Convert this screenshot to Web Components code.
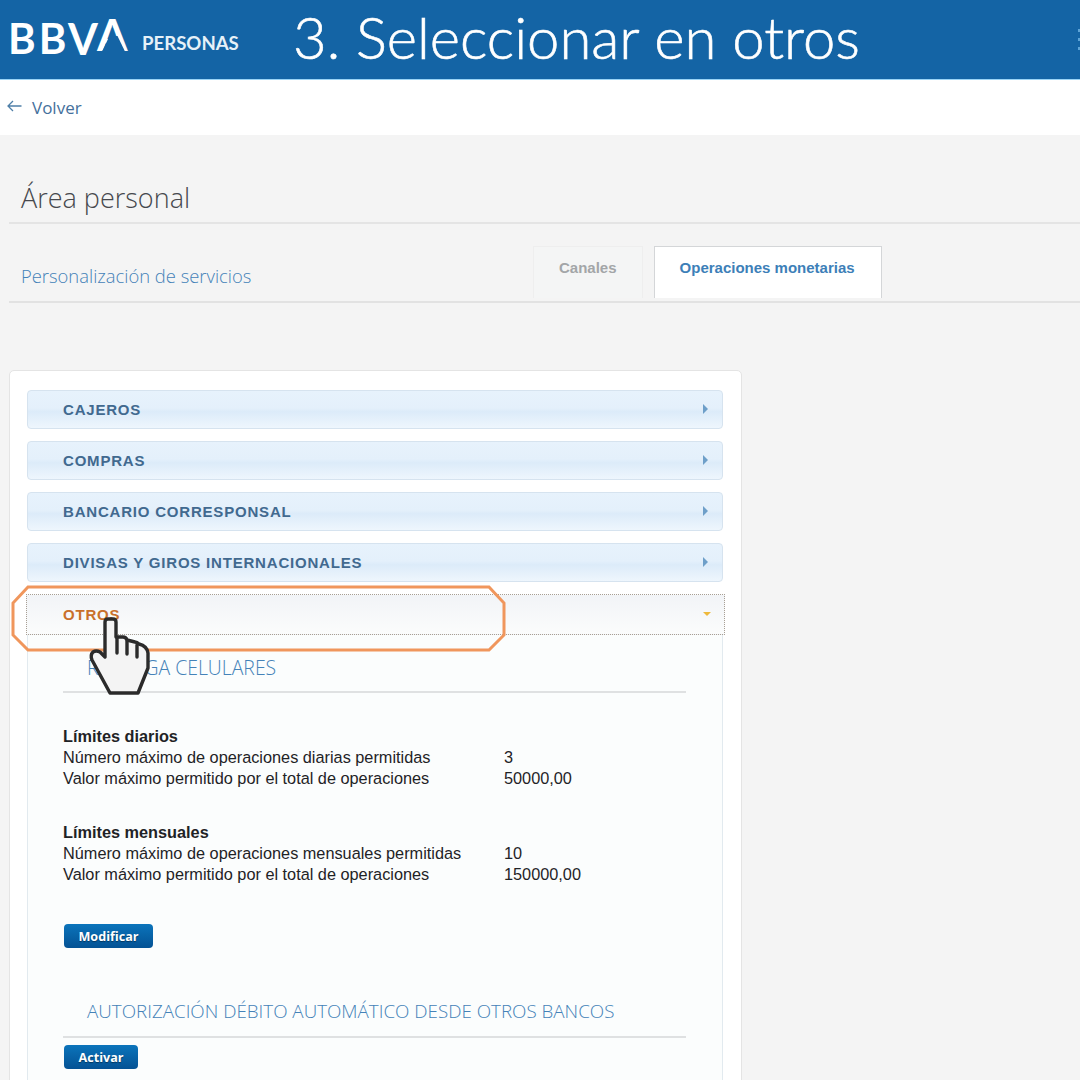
<!DOCTYPE html>
<html lang="es">
<head>
<meta charset="utf-8">
<title>Seleccionar en otros</title>
<style>
  html, body { margin: 0; height: 1080px; overflow: hidden; background: #f4f4f4; }
  body { font-family: "Liberation Sans", Arial, sans-serif; }
</style>
</head>
<body>
<bb-page>
  <bb-header slot="top" heading="3. Seleccionar en otros"></bb-header>
  <bb-back slot="top">Volver</bb-back>
  <bb-title slot="top" heading="Área personal" sub="Personalización de servicios">
    <bb-tab>Canales</bb-tab>
    <bb-tab active>Operaciones monetarias</bb-tab>
  </bb-title>
  <bb-card>
    <bb-accordion label="CAJEROS"></bb-accordion>
    <bb-accordion label="COMPRAS"></bb-accordion>
    <bb-accordion label="BANCARIO CORRESPONSAL"></bb-accordion>
    <bb-accordion label="DIVISAS Y GIROS INTERNACIONALES"></bb-accordion>
    <bb-accordion label="OTROS" open>
      <bb-section heading="RECARGA CELULARES" style="--h3-size:19.4px">
        <bb-limits heading="Límites diarios" style="margin-top:33px">
          <span>Número máximo de operaciones diarias permitidas</span><span>3</span>
          <span>Valor máximo permitido por el total de operaciones</span><span>50000,00</span>
        </bb-limits>
        <bb-limits heading="Límites mensuales" style="margin-top:33px">
          <span>Número máximo de operaciones mensuales permitidas</span><span>10</span>
          <span>Valor máximo permitido por el total de operaciones</span><span>150000,00</span>
        </bb-limits>
        <bb-button style="margin-top:39px">Modificar</bb-button>
      </bb-section>
      <bb-section heading="AUTORIZACIÓN DÉBITO AUTOMÁTICO DESDE OTROS BANCOS" style="margin-top:32.5px;--h3-pad:18px;--h3-size:18.8px">
        <bb-button style="margin-top:7px">Activar</bb-button>
      </bb-section>
    </bb-accordion>
  </bb-card>
  <bb-callout></bb-callout>
  <bb-hand></bb-hand>
</bb-page>

<script>
function define(name, html, fill) {
  customElements.define(name, class extends HTMLElement {
    constructor() {
      super();
      this.attachShadow({mode: 'open'});
      let template = document.createElement('template');
      template.innerHTML = html;
      this.shadowRoot.appendChild(template.content.cloneNode(true));
    }
    connectedCallback() {
      if (fill) fill(this.shadowRoot, this);
    }
  });
}

define('bb-page', `
  <style>
    :host { display: block; position: relative; width: 1080px; height: 1080px; overflow: hidden; }
  </style>
  <slot name="top"></slot>
  <slot></slot>`);

define('bb-header', `
  <style>
    :host { display: flex; align-items: center; height: 79px; background: #1464a5; border-bottom: 1px solid #9ad4f6; color: #fff; overflow: hidden; }
    svg { display: block; flex: none; margin-left: 8px; overflow: visible; }
    text { font-family: "Lato", sans-serif; font-weight: 700; fill: #fff; }
    .unit { font: 700 18.6px "Lato", sans-serif; margin: 6px 0 0 8px; width: 153px; flex: none; color: #e6f1f8; }
    h1 { margin: -6px 0 0 -2px; font: 300 58px "Lato", sans-serif; -webkit-text-stroke: .6px #fff; white-space: nowrap; flex: none; line-height: 79px; }
    .dots { margin-left: auto; display: grid; gap: 6px; }
    .dots i { display: block; width: 2px; height: 3px; background: #5fa5d8; }
  </style>
  <svg width="126" height="42" viewBox="0 0 126 42" role="img" aria-label="BBVA">
    <text y="35" font-size="42" letter-spacing="3"><tspan x="0">BB</tspan><tspan x="60" dy="1" font-size="43" letter-spacing="0">V</tspan><tspan x="89" dy="-4" font-size="44" letter-spacing="0">A</tspan></text>
    <polygon points="101.5,17 109.5,17 117,32.5 94,32.5" fill="#1464a5"></polygon>
  </svg>
  <span class="unit">PERSONAS</span>
  <h1></h1>
  <span class="dots"><i></i><i></i><i></i></span>`, (root, host) => {
    root.querySelector('h1').textContent = host.getAttribute('heading');
  });

define('bb-back', `
  <style>
    :host { display: flex; align-items: center; gap: 10px; height: 55px; background: #fff; padding-left: 7px; color: #44709c; font: 400 17px "Open Sans", sans-serif; }
    svg { display: block; margin-top: -3px; }
  </style>
  <svg width="15" height="12" viewBox="0 0 15 12" fill="none" stroke="#4f7fa8" stroke-width="1.3"><path d="M14.5 6H1M6 1 1 6l5 5"/></svg>
  <slot></slot>`);

define('bb-title', `
  <style>
    :host { display: block; padding: 43px 0 0 9px; }
    h2 { margin: 0; padding-left: 12px; height: 44px; font: 300 27px/40px "Open Sans", sans-serif; color: #46484d; border-bottom: 2px solid #e4e4e4; }
    .row { display: flex; align-items: flex-end; height: 77px; border-bottom: 2px solid #e2e2e2; }
    .sub { padding: 0 0 12px 12px; width: 512px; flex: none; font: 300 18.4px/26px "Open Sans", sans-serif; color: #4482b8; }
    .tabs { display: flex; gap: 11px; margin-bottom: 3px; }
  </style>
  <h2></h2>
  <div class="row"><div class="sub"></div><div class="tabs"><slot></slot></div></div>`, (root, host) => {
    root.querySelector('h2').textContent = host.getAttribute('heading');
    root.querySelector('.sub').textContent = host.getAttribute('sub');
  });

define('bb-tab', `
  <style>
    :host { display: block; box-sizing: border-box; height: 52px; padding: 12px 25px 0; background: #f4f5f5; border: 1px solid #eeeeee; border-bottom: 0; color: #a3a6a8; font: 700 15px/17px "Liberation Sans", sans-serif; }
    :host([active]) { padding-right: 26px; background: #fff; border-color: #d4d6d8; color: #3d7fb8; }
  </style>
  <slot></slot>`);

define('bb-card', `
  <style>
    :host { display: block; box-sizing: border-box; width: 733px; height: 800px; margin: 67px 0 0 9px; padding: 19px 18px 0 17px; background: #fff; border: 1px solid #e4e4e4; border-radius: 5px; }
  </style>
  <slot></slot>`);

define('bb-accordion', `
  <style>
    :host { display: block; margin-bottom: 12px; }
    .head { box-sizing: border-box; display: flex; align-items: center; justify-content: space-between; height: 39px; padding: 0 14px 1px 35px; border: 1px solid #d6e3ef; border-radius: 4px; background: linear-gradient(#e7f2fc 0, #e4f0fb 46%, #dcebf9 56%, #eef6fd 100%); color: #41698f; font: 700 15px/17px "Liberation Sans", sans-serif; letter-spacing: .8px; }
    .arrow { width: 0; height: 0; border-left: 5px solid #6e9fc9; border-top: 5px solid transparent; border-bottom: 5px solid transparent; }
    :host([open]) .head { height: 41px; width: 699px; margin-left: -1px; padding-left: 36px; border: 1px dotted #a89f94; border-radius: 0; background: linear-gradient(#f2f4f7, #fbfcfc); color: #c9702b; }
    :host([open]) .arrow { border-top: 4px solid #eeb93c; border-bottom: 0; border-left: 4px solid transparent; border-right: 4px solid transparent; margin-right: -1px; }
    .panel { display: none; box-sizing: border-box; width: 696px; height: 460px; padding: 0 35px; background: #fbfdfd; border: 1px solid #e2eaef; border-width: 0 1px; }
    :host([open]) .panel { display: block; }
  </style>
  <div class="head"><span class="label"></span><i class="arrow"></i></div>
  <div class="panel"><slot></slot></div>`, (root, host) => {
    root.querySelector('.label').textContent = host.getAttribute('label');
  });

define('bb-section', `
  <style>
    :host { display: block; }
    h3 { margin: 0; box-sizing: border-box; height: 58px; padding: var(--h3-pad, 20px) 0 0 24px; font: 300 var(--h3-size, 18.9px)/26px "Open Sans", sans-serif; color: #4482b8; border-bottom: 2px solid #dfe1e2; white-space: nowrap; width: 623px; }
  </style>
  <h3></h3>
  <slot></slot>`, (root, host) => {
    root.querySelector('h3').textContent = host.getAttribute('heading');
  });

define('bb-limits', `
  <style>
    :host { display: block; color: #1f2326; font: 400 16.3px/21px "Liberation Sans", sans-serif; }
    b { display: block; font-weight: 700; }
    .grid { display: grid; grid-template-columns: 441px auto; }
  </style>
  <b></b>
  <div class="grid"><slot></slot></div>`, (root, host) => {
    root.querySelector('b').textContent = host.getAttribute('heading');
  });

define('bb-button', `
  <style>
    :host { display: block; width: fit-content; box-sizing: border-box; height: 23.5px; margin-left: 1px; padding: 0 14.5px; border-radius: 4px; background: linear-gradient(#0b74bb, #045294); color: #fff; font: 700 12.6px/25px "Open Sans", sans-serif; text-shadow: 0 1px 1px rgba(0,0,0,.4); }
  </style>
  <slot></slot>`);

// overlays: annotation added over the screenshot
define('bb-callout', `
  <style>
    :host { position: absolute; left: 10px; top: 584px; display: block; }
    svg { display: block; }
  </style>
  <svg width="497" height="68" viewBox="10 584 497 68" fill="none"><path d="M28 587H489L504 603V635L489 650H28L13 635V603Z" stroke="#f0965c" stroke-width="3"/></svg>`);

define('bb-hand', `
  <style>
    :host { position: absolute; left: 85px; top: 612px; display: block; }
    svg { display: block; }
  </style>
  <svg width="70" height="88" viewBox="85 612 70 88" fill="#f4f4f4" stroke="#2b2b2b" stroke-width="3.4" stroke-linejoin="round" stroke-linecap="round">
    <path d="M105 657V622Q105 619 108 619H113Q116 619 116 622V637L123 637Q126 637 127 640L135 642Q137 642 139 644Q147 646 148 653V668L138 693H110L92 660Q90 655 93 652Q96 650 100 652Z"/>
    <path d="M117 638V653M127 641V654M137 645V657" fill="none"/>
  </svg>`);
</script>
</body>
</html>
